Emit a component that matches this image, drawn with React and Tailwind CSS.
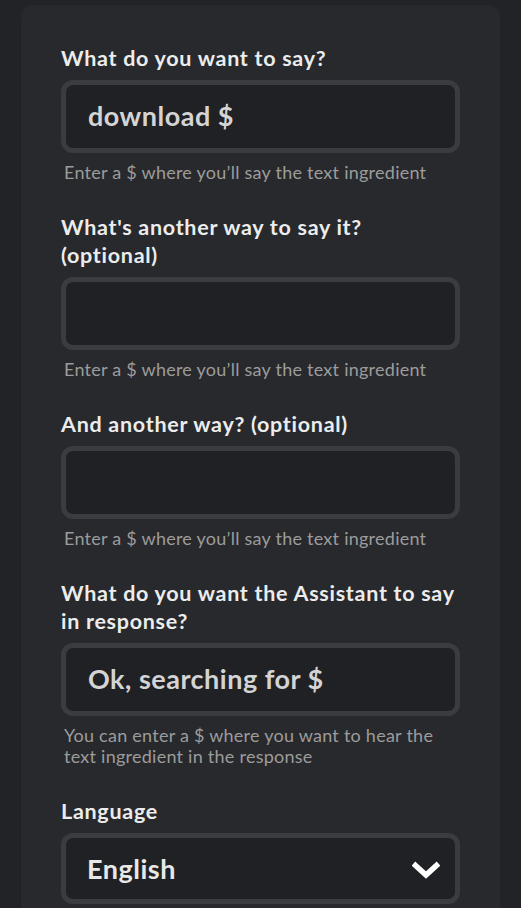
import React from "react";

function Label({ children }) {
  return (
    <label className="text-[21.5px] leading-[28px] font-bold tracking-[0.72px] text-[#ececec]">{children}</label>
  );
}

function Field({ label, value, helper }) {
  return (
    <div className="flex flex-col">
      <Label>{label}</Label>
      <div className="mt-2 h-[73px] rounded-[12px] border-[5px] border-[#3a3c3f] bg-[#202124] flex items-center px-[22px]">
        <span className="text-[27px] font-bold tracking-[0.5px] text-[#d4d4d4]">{value}</span>
      </div>
      <p className="mt-[9px] ml-[3px] text-[18px] leading-[21px] tracking-[0.25px] text-[#9c9c9c]">{helper}</p>
    </div>
  );
}

export default function App() {
  const helper = "Enter a $ where you\u2019ll say the text ingredient";
  return (
    <div className="h-[908px] overflow-hidden bg-[#222326] px-[21px] pt-[5px]" style={{ fontFamily: "Lato, 'Noto Sans', sans-serif" }}>
      <div className="rounded-t-[12px] bg-[#28292c] px-10 pt-[39px] pb-10 flex flex-col gap-[30px]">
        <Field label="What do you want to say?" value="download $" helper={helper} />
        <Field label={<>What's another way to say it?<br />(optional)</>} value="" helper={helper} />
        <Field label="And another way? (optional)" value="" helper={helper} />
        <Field
          label={<>What do you want the Assistant to say<br />in response?</>}
          value="Ok, searching for $"
          helper={<>You can enter a $ where you want to hear the<br />text ingredient in the response</>}
        />
        <div className="flex flex-col">
          <Label>Language</Label>
          <div className="mt-2 h-[71px] rounded-[12px] border-[5px] border-[#3a3c3f] bg-[#202124] flex items-center justify-between pl-[21px] pr-[15px]">
            <span className="mt-[2px] text-[27px] font-bold tracking-[0.5px] text-[#e8e8e8]">English</span>
            <svg className="mt-[3px]" width="28" height="18" viewBox="0 0 28 18" fill="none">
              <path d="M3.5 4.5 L14 14 L24.5 4.5" stroke="#ffffff" strokeWidth="5.5" strokeLinecap="square" strokeLinejoin="miter" />
            </svg>
          </div>
        </div>
      </div>
    </div>
  );
}
